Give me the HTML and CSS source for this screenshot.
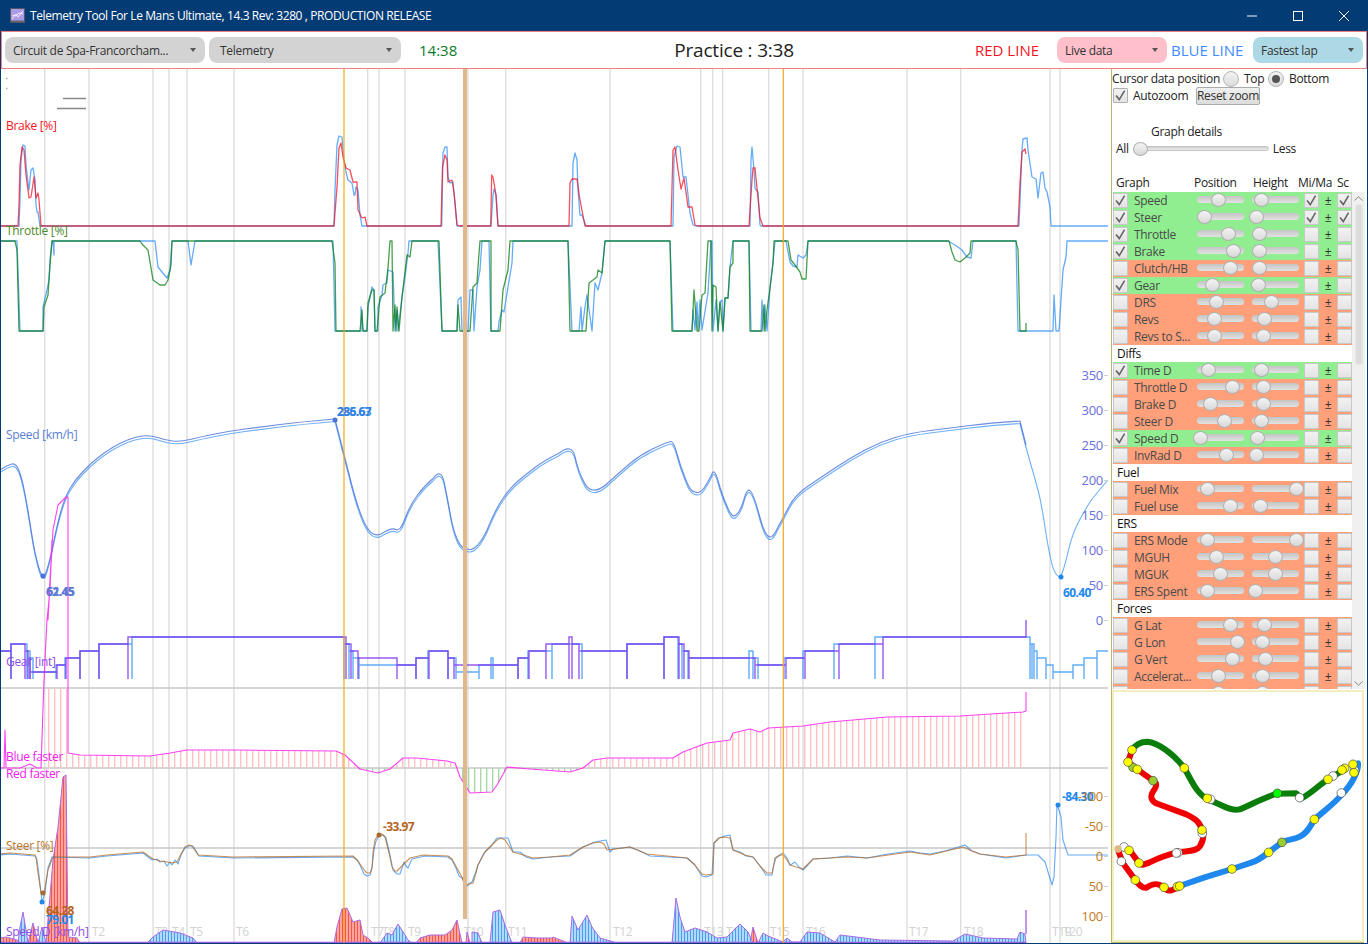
FILE: index.html
```html
<!DOCTYPE html>
<html lang="en">
<head>
<meta charset="utf-8">
<title>Telemetry Tool For Le Mans Ultimate</title>
<link rel="stylesheet" href="styles.css">
</head>
<body>
<div class="window">
  <header class="titlebar">
    <svg class="appicon" viewBox="0 0 15 15"><rect x=".5" y=".5" width="14" height="14" fill="#a99be8" stroke="#55556a"/><path d="M2 11 6 6l2 3 5-6M2 7l4 1 3-3 4 1" fill="none" stroke="#f4e9ff" stroke-width="1"/><rect x="1" y="12.5" width="13" height="1.5" fill="#666"/></svg>
    <span class="title">Telemetry Tool For Le Mans Ultimate, 14.3 Rev: 3280 , PRODUCTION RELEASE</span>
    <div class="caption">
      <span class="capbtn"><svg width="10" height="10" viewBox="0 0 10 10"><path d="M0 5h10" stroke="#fff" stroke-width="1"/></svg></span>
      <span class="capbtn"><svg width="10" height="10" viewBox="0 0 10 10"><rect x=".5" y=".5" width="9" height="9" fill="none" stroke="#fff"/></svg></span>
      <span class="capbtn"><svg width="10" height="10" viewBox="0 0 10 10"><path d="M0 0l10 10M10 0 0 10" stroke="#fff" stroke-width="1"/></svg></span>
    </div>
  </header>

  <div class="toolbar">
    <div class="combo combo-track">Circuit de Spa-Francorcham...<i class="caret"></i></div>
    <div class="combo combo-mode">Telemetry<i class="caret"></i></div>
    <span class="clock">14:38</span>
    <span class="session">Practice : 3:38</span>
    <span class="line-label red">RED LINE</span>
    <div class="combo combo-pink">Live data<i class="caret"></i></div>
    <span class="line-label blue">BLUE LINE</span>
    <div class="combo combo-blue">Fastest lap<i class="caret"></i></div>
  </div>

  <main class="content">
    <section class="chart">
      <svg class="plot" viewBox="1 69 1110 874" width="1110" height="874">
        <defs>
          <pattern id="hatchPink" patternUnits="userSpaceOnUse" width="6" height="10"><rect width="1.4" height="10" fill="#ffc2c2"/></pattern>
          <pattern id="hatchGreen" patternUnits="userSpaceOnUse" width="6" height="10"><rect width="1.4" height="10" fill="#a8d8a8"/></pattern>
          <pattern id="hatchRed" patternUnits="userSpaceOnUse" width="3" height="10"><rect width="3" height="10" fill="#ffa49c"/><rect width="1" height="10" fill="#f4564c"/></pattern>
          <pattern id="hatchBlue" patternUnits="userSpaceOnUse" width="3" height="10"><rect width="3" height="10" fill="#b2d8fb"/><rect width="1" height="10" fill="#4a9ff2"/></pattern>
          <path id="speedCurve" d="M0 470Q8 465 12 464Q16 463 19 470.5Q22 478 25 494Q28 510 31.5 532.5Q35 555 39 568Q43 582 46.5 571Q50 560 53.5 542.5Q57 525 61 511Q65 497 70 488.5Q75 480 82.5 472Q90 464 97.5 458Q105 452 112.5 447.5Q120 443 127.5 440Q135 437 142.5 436Q150 435 157.5 437.5Q165 440 172.5 441Q180 442 190 439.5Q200 437 215 434Q230 431 245 429Q260 427 280 424.5Q300 422 335 419L350 478Q358 510 365 524Q372 538 381 534Q392 527 396 529.5Q400 532 405 518.5Q410 505 417.5 495Q425 485 433 478.5Q441 468 444 481.5Q447 495 450 512.5Q453 530 457.5 540Q462 550 470 549.5Q478 549 487 530Q495 510 502.5 499Q510 488 517.5 481.5Q525 475 535 467.5Q545 460 558.5 453.5Q572 443 575 456.5Q578 470 582.5 479Q587 490 593.5 490Q600 491 610 481Q620 472 630 463.5Q640 455 652.5 449Q665 443 669 442Q673 439 676.5 452Q680 465 685 477.5Q690 492 695 492Q700 494 704 488Q708 482 711 476Q714 466 718 480.5Q722 495 727 506Q732 519 736 515Q740 512 743.5 501Q747 487 750.5 491Q754 495 759 514Q764 533 768 536Q772 540 777.5 528Q783 518 789 506.5Q795 495 807.5 486.5Q820 478 835 468Q850 458 865 450Q880 442 895 437.5Q910 433 930 430.5Q950 428 970 425.5Q990 423 1020 421L1026 445"/>
        </defs>

        <g class="grid">
          <path d="M44.7 69V943M89 69V943M153 69V943M169 69V943M187 69V943M234 69V943M367.7 69V943M379 69V943M405 69V943M468 69V943M505.7 69V943M610 69V943M700.7 69V943M712.7 69V943M722.7 69V943M768.7 69V943M803 69V943M907 69V943M960.7 69V943M1050 69V943M1060 69V943"/>
        </g>
        <g class="hgrid"><path d="M1 688H1108M1 768H1108M1 848H1108"/></g>

        <path class="mark" d="M63 98.5H86M57 108.5H86"/>
        <path class="dots" d="M6 78.5h1.5M6 88.5h1.5"/>

        <g class="turns">
          <text x="92" y="936">T2</text><text x="155" y="936">T3</text><text x="172" y="936">T4</text><text x="190" y="936">T5</text><text x="236" y="936">T6</text><text x="371" y="936">T7</text><text x="382" y="936">T8</text><text x="408" y="936">T9</text><text x="464" y="936">T10</text><text x="508" y="936">T11</text><text x="613" y="936">T12</text><text x="704" y="936">T13</text><text x="726" y="936">T14</text><text x="770" y="936">T15</text><text x="806" y="936">T16</text><text x="909" y="936">T17</text><text x="964" y="936">T18</text><text x="1052" y="936">T19</text><text x="1063" y="936">T20</text>
        </g>

        <!-- Brake -->
        <path class="ln blue-ln" d="M0 226H19L20 200 21 160 23 145 25 146 26 165 28 182 29 190 31 170 33 168 35 180 36 205 37 212 38 212 40 226H334L335 190 337 145 339 136 342 137 344 160 346 172 348 180 352 183 354 195 355 195 356 187 358 190 360 215 362 226H441.7L443 153 445 147 447 147 448 177 450 183 453 182 455 202 457 226H491L493 195 494 189 496 195 498 226H572L573 163 575 153 577 160 578 190 580 215 582 215 586 226H673L674 157 677 146 680 147 683 177 686 177 690 213 693 225 696 226H750L751 160 752 147 754 170 755 188 758 192 760 225 761 226H1019L1022 150 1023 139 1027 138 1028 150 1032 177 1036 179 1038 198 1041 173 1043 172 1045 188 1047 192 1050 207 1051 226H1108"/>
        <path class="ln red-ln" d="M0 226H18L19 205 20 165 22 147 24 150 26 175 29 198 31 197 34 177 36 198 38 193 39 200 41 226H334L337 187 339 148 341 143 343 157 346 168 350 170 353 182 357 182 358 210 362 218 365 217 367 226H441L442.5 167 445 155 447 160 448 182 452 180 454 193 457 225 460 226H490.7L491.7 175 493 177 496 195 498 226H569L570 183 572 179 577 179 580 200 585 226H671L673 150 675 147 678 170 681 189 684 178 688 207 692 207 695 225 698 226H749L752 180 753 168 755 168 757 188 760 218 763 226H1018L1020 183 1022 152 1025 149 1026 154"/>

        <!-- Throttle -->
        <path class="ln blue-ln" d="M0 241H17L20 331H43L43 307 47 290 49 280 50 260 52 241H53L54 255 54 241H155L158 267 162 272 167 278 170 270 172 241H188L191 265 193 253 195 241H333L335 331H361L361 307 363 331H367L368 307 372 287 374 290 375 331H378L378 307 382 295 383 285 387 283 388 270 393 272 395 331 397 310 398 331 402 297 405 277 408 253 409 241H438L442 331H457L458 300 461 297 462 331H468L470 290 473 290 474 331 477 287 480 270 482 241H489L491 331H498L499 322 502 310 504 312 508 287 512 263 513 241H568L572 331H579L581 307 582 331 585 307 587 295 592 331 595 283 598 290 602 273 605 241H670L673 331H692L693 310 695 330 697 302 698 330 700 300 702 330 708 293 711 241H712L713 331 716 300 718 331 720 302 722 300 723 331 725 298 728 298 730 267 733 241H749L751 331H761L762 300 764 331 765 305 767 331 770 288 773 263 775 241H786L790 262 793 266 797 267 798 255 803 258 806 255 808 241H948L955 245 962 250 967 257 971 258 973 241H1016L1018 331H1053L1054 295 1056 331H1059L1061 300 1063 270 1066 257 1067 241H1108"/>
        <path class="ln green-ln" d="M0 241H15L17 250 19 331H43L44 307 48 295 50 265 52 241H140L142 244 148 250 150 262 153 280 160 285 165 285 168 280 171 265 172 241H332L335 263 336 331H360L362 310 363 331H367L368 303 372 290 374 290 375 331H377L380 297 385 293 388 268 390 241H392L393 331 395 305 396 331 397 307 399 331 402 297 407 255 410 257 412 241H439L442 331H457L458 305 460 331H470L473 287 477 283 478 267 480 241H491L491 331H500L503 290 508 270 510 241H568L570 331H586L589 283 597 277 598 270 602 273 605 241H670L672 331H692L694 290 697 331H699L702 295 705 293 708 241H711L712 331 713 285 716 287 718 331 720 302 723 331 725 298 728 298 730 267 733 263 733 241H749L750 331H762L764 305 765 331 767 310 770 288 773 263 774 241H788L791 260 795 265 800 272 802 279 806 279 808 241H949L952 252 955 260 960 262 965 258 970 253 971 241H1016L1018 250 1020 331H1026L1026 323"/>

        <!-- Speed -->
        <use href="#speedCurve" class="ln lightblue-ln" transform="translate(0 2.5)"/>
        <path class="ln lightblue-ln" d="M1026 447Q1030 462 1033 472Q1036 482 1039 494Q1042 507 1045 527Q1048 547 1050.5 558Q1053 570 1056 574Q1060 580 1062.5 572Q1065 565 1068.5 550Q1072 535 1078.5 522Q1085 510 1090 502Q1095 495 1108 480"/>
        <use href="#speedCurve" class="ln speed-ln"/>
        <g class="pt-speed"><circle cx="335" cy="420" r="2.5"/><circle cx="43" cy="576" r="2.5"/></g>
        <circle class="pt-blue" cx="1061" cy="577" r="2.5"/>

        <!-- Gear -->
        <path class="gear blue-gear" d="M0 651H11V679V644H27V679V651H30V679V658H33V679V672H56V679V665H65V679V658H80V679V651H99V679V644H132V679V637H344V679V644H349V679V651H353V679V658H359V679V665H416V679V658H428V679V651H448V679V658H456V679V672H479V679V665H491V679V658H493V679V665H518V679V658H528V679V651H552V679V644H582V679V651H627V679V644H664V679V637H678V679V644H682V679V651H688V679V658H749V679V651H753V679V658H758V679V665H784V679V658H803V679V651H834V679V644H875V679V637H1030V679V644H1032V679V644H1034V679V651H1037V679V658H1046V679V665H1053V679V672H1073V679V665H1084V679V658H1097V679V651H1108"/>
        <path class="gear purple-gear" d="M0 651H11V679V644H25V679V651H28V679V658H30V679V672H57V679V665H66V679V658H80V679V651H99V679V644H128V679V637H346V679V644H351V679V651H358V679V658H397V679V665H416V679V658H429V679V651H448V679V658H454V679V665H518V679V658H529V679V651H546V679V644H569V679V637H572V679V644H579V679V651H627V679V644H664V679V637H679V679V644H684V679V651H689V679V658H755V679V665H786V679V658H805V679V651H839V679V644H883V679V637H1026V620"/>

        <!-- Time difference -->
        <polygon fill="url(#hatchPink)" points="44,768 44,688 68,688 68,753 80,755 150,756 170,753 187,750 234,750 336,751 345,755 360,768"/>
        <polygon fill="url(#hatchPink)" points="390,768 403,758 417,758 447,761 455,763 458,768"/>
        <polygon fill="url(#hatchPink)" points="583,768 593,760 607,758 673,758 683,752 707,743 730,740 733,733 750,729 760,732 768,728 803,726 830,722 887,717 960,716 1023,712 1023,768"/>
        <polygon fill="url(#hatchGreen)" points="360,768 378,773 390,768"/>
        <polygon fill="url(#hatchGreen)" points="458,768 460,777 470,793 492,792 497,785 507,768"/>
        <polygon fill="url(#hatchGreen)" points="507,768 530,769 570,772 583,768"/>
        <path class="ln magenta-ln" d="M1 768H4L5 730 6 768H20L30 764 37 768H41L44 680 47 620 50 590 52 540 48 620 53 530 58 505 66 497H68V753L80 755 150 756 170 753 187 750 234 750 336 751 345 755 360 769 378 773 390 769 403 758 417 758 447 761 455 763 460 777 470 793 492 792 497 785 507 767 530 769 570 772 583 768 593 760 607 758 673 758 683 752 707 743 730 740 733 733 750 729 760 732 768 728 803 726 830 722 887 717 960 716 1023 712 1026 711V692"/>

        <!-- Speed difference -->
        <g class="dif-red">
          <polygon points="0,943 0,938 6,937 17,940 20,943"/>
          <polygon points="28,943 33,923 38,943"/>
          <polygon points="46,943 53,860 58,827 63,777 66,775 68,937 77,938 80,943"/>
          <polygon points="334,943 337,927 342,909 347,908 353,922 360,920 363,935 368,938 373,943"/>
          <polygon points="416,943 420,938 430,935 445,935 452,930 457,920 462,943"/>
          <polygon points="466,943 467,932 470,943"/>
          <polygon points="520,943 523,937 537,938 552,938 553,937 568,943"/>
          <polygon points="623,943 650,943"/>
          <polygon points="750,943 753,927 758,943"/>
        </g>
        <g class="dif-blue">
          <polygon points="18,943 20,927 23,912 26,930 28,943"/>
          <polygon points="38,943 42,927 46,943"/>
          <polygon points="147,943 153,937 163,930 180,933 193,938 197,943"/>
          <polygon points="380,943 387,933 392,935 398,924 405,935 408,940 412,943"/>
          <polygon points="472,943 472,932 478,933 482,943"/>
          <polygon points="490,943 493,912 500,910 505,925 512,943"/>
          <polygon points="570,943 572,916 578,930 587,915 592,927 600,938 617,943"/>
          <polygon points="672,943 676,898 680,917 685,932 695,928 707,932 717,938 727,937 740,924 748,932 753,943"/>
          <polygon points="758,943 763,933 768,936 783,942 787,938 792,942 800,942 807,932 820,933 835,942 840,935 880,940 953,941 965,934 983,938 1017,939 1020,932 1025,934 1026,943"/>
        </g>
        <path class="ln diff-ln" d="M0 942.5H1026M1026 934V910"/>

        <!-- Steer -->
        <path class="ln blue-ln thin" d="M0 855 10 854 35 856 37 860 39 875 42 902 45 893 48 868 52 857 90 858 107 856 143 853 152 860 157 859 160 862 164 861 167 866 170 862 172 865 175 860 178 864 181 855 185 848 189 846 193 846 199 856 233 858 353 857 357 860 360 865 364 874 367 876 370 875 372 868 374 850 376 841 379 836 383 835 386 838 390 855 393 870 397 874 400 874 404 862 406 866 408 868 412 859 425 856 448 857 452 860 456 868 459 876 462 878 466 887 469 884 472 882 475 874 478 865 485 852 491 846 497 838 502 838 508 838 511 846 513 852 520 852 526 857 533 859 550 857 570 856 583 847 595 842 600 841 606 840 608 846 610 852 613 849 630 847 640 851 650 856 687 858 694 864 700 873 702 876 706 877 712 875 713 858 714 843 719 838 725 836 730 835 733 850 740 852 746 856 753 857 760 866 766 875 772 875 774 864 776 858 780 855 783 853 787 858 790 865 792 864 795 862 799 867 803 870 808 865 813 859 830 858 847 856 867 858 888 854 910 851 920 853 930 854 945 851 965 845 972 851 980 854 1006 858 1026 855 1038 855 1045 862 1052 885 1054 877 1056 837 1057 804 1061 817 1063 840 1068 855 1108 855"/>
        <path class="ln steer-ln" d="M0 854 10 853 35 855 36 857 38 873 41 893 44 893 48 870 53 857 90 857 107 855 143 852 153 859 160 861 167 862 172 863 177 862 181 854 185 847 189 845 192 846 198 855 233 857 353 856 358 861 362 867 365 871 367 873 370 873 372 868 373 852 375 840 378 835 382 834 385 837 389 853 392 867 395 871 397 871 403 865 410 858 423 855 448 856 452 859 458 870 462 877 465 885 469 884 473 883 476 873 478 865 484 853 490 847 497 840 501 838 505 840 509 846 513 852 520 854 533 858 550 857 570 855 583 847 593 843 600 842 604 844 607 850 615 849 630 847 647 854 687 858 695 865 702 874 706 875 713 874 714 843 719 838 725 837 730 838 733 850 745 855 753 857 760 866 767 873 772 873 774 864 775 858 780 855 783 855 787 860 790 865 796 867 803 869 808 864 813 859 847 857 867 858 910 852 930 855 963 847 972 851 980 854 1006 857 1026 855V833"/>
        <circle class="pt-steer" cx="379" cy="835" r="2.5"/><circle class="pt-steer" cx="43" cy="893" r="2.5"/>
        <circle class="pt-blue" cx="42" cy="902" r="2.5"/><circle class="pt-blue" cx="1058" cy="805" r="2.5"/>

        <!-- Selection cursors -->
        <path class="band" d="M465 69V919"/>
        <path class="cursor" d="M344 69V943M783.3 69V943"/>

        <!-- Series captions -->
        <g class="captions">
          <text class="c-brake" x="6" y="130">Brake [%]</text>
          <text class="c-throttle" x="6" y="235">Throttle [%]</text>
          <text class="c-speed" x="6" y="439">Speed [km/h]</text>
          <text class="c-gear" x="6" y="666">Gear [int]</text>
          <text class="c-mag" x="6" y="761">Blue faster</text>
          <text class="c-mag" x="6" y="778">Red faster</text>
          <text class="c-steer" x="6" y="850">Steer [%]</text>
          <text class="c-gear" x="6" y="936">Speed D [km/h]</text>
        </g>

        <!-- Value read-outs -->
        <g class="values">
          <text class="v-speed" x="337" y="416">286.67</text><text class="v-blue o" x="337" y="416">235.63</text>
          <text class="v-speed" x="46" y="596">62.45</text><text class="v-speed o" x="46.6" y="596">61.45</text>
          <text class="v-blue" x="1063" y="597">60.40</text>
          <text class="v-steer" x="383" y="831">-33.97</text>
          <text class="v-steer" x="46" y="915">64.28</text>
          <text class="v-blue" x="46" y="924">79.01</text>
          <text class="v-blue" x="1062" y="801">-84.30</text>
        </g>

        <!-- Axes -->
        <g class="ticks">
          <path d="M1104 375.5h4M1104 410.5h4M1104 445.5h4M1104 480.5h4M1104 515.5h4M1104 550.5h4M1104 585.5h4M1104 620.5h4M1104 796.5h4M1104 826.5h4M1104 856.5h4M1104 886.5h4M1104 916.5h4"/>
        </g>
        <g class="axis axis-speed">
          <text x="1103" y="380">350</text><text x="1103" y="415">300</text><text x="1103" y="450">250</text><text x="1103" y="485">200</text><text x="1103" y="520">150</text><text x="1103" y="555">100</text><text x="1103" y="590">50</text><text x="1103" y="625">0</text>
        </g>
        <g class="axis axis-steer">
          <text x="1103" y="801">-100</text><text x="1103" y="831">-50</text><text x="1103" y="861">0</text><text x="1103" y="891">50</text><text x="1103" y="921">100</text>
        </g>
      </svg>
    </section>

    <aside class="side">
      <div class="ctl ctl-cursor">
        <span class="ctl-label">Cursor data position</span>
        <i class="radio"></i><span class="radio-text">Top</span>
        <i class="radio sel"></i><span class="radio-text">Bottom</span>
      </div>
      <div class="ctl ctl-zoom">
        <span class="check on"><svg viewBox="0 0 16 16"><path d="M2.5 8 6.5 13 13 2"/></svg></span>
        <span class="zoom-label">Autozoom</span>
        <span class="btn">Reset zoom</span>
      </div>
      <div class="details-title">Graph details</div>
      <div class="details">
        <span>All</span>
        <span class="track-long"><i class="thumb" style="--c:7px"></i></span>
        <span>Less</span>
      </div>
      <div class="heads">
        <span class="h-graph">Graph</span><span class="h-pos">Position</span><span class="h-height">Height</span><span class="h-mima">Mi/Ma</span><span>Sc</span>
      </div>

      <div class="listwrap">
        <div class="list">
          <div class="row on"><span class="check on"><svg viewBox="0 0 16 16"><path d="M2.5 8 6.5 13 13 2"/></svg></span><span class="name">Speed</span><span class="track"><i class="thumb" style="--c:21px"></i></span><span class="track t2"><i class="thumb" style="--c:9px"></i></span><span class="check c-mm on"><svg viewBox="0 0 16 16"><path d="M2.5 8 6.5 13 13 2"/></svg></span><span class="pm">±</span><span class="check on"><svg viewBox="0 0 16 16"><path d="M2.5 8 6.5 13 13 2"/></svg></span></div>
          <div class="row on"><span class="check on"><svg viewBox="0 0 16 16"><path d="M2.5 8 6.5 13 13 2"/></svg></span><span class="name">Steer</span><span class="track"><i class="thumb" style="--c:7px"></i></span><span class="track t2"><i class="thumb" style="--c:4px"></i></span><span class="check c-mm on"><svg viewBox="0 0 16 16"><path d="M2.5 8 6.5 13 13 2"/></svg></span><span class="pm">±</span><span class="check on"><svg viewBox="0 0 16 16"><path d="M2.5 8 6.5 13 13 2"/></svg></span></div>
          <div class="row on"><span class="check on"><svg viewBox="0 0 16 16"><path d="M2.5 8 6.5 13 13 2"/></svg></span><span class="name">Throttle</span><span class="track"><i class="thumb" style="--c:31px"></i></span><span class="track t2"><i class="thumb" style="--c:7px"></i></span><span class="check c-mm"></span><span class="pm">±</span><span class="check"></span></div>
          <div class="row on"><span class="check on"><svg viewBox="0 0 16 16"><path d="M2.5 8 6.5 13 13 2"/></svg></span><span class="name">Brake</span><span class="track"><i class="thumb" style="--c:36px"></i></span><span class="track t2"><i class="thumb" style="--c:7px"></i></span><span class="check c-mm"></span><span class="pm">±</span><span class="check"></span></div>
          <div class="row off"><span class="check"></span><span class="name">Clutch/HB</span><span class="track"><i class="thumb" style="--c:33px"></i></span><span class="track t2"><i class="thumb" style="--c:7px"></i></span><span class="check c-mm"></span><span class="pm">±</span><span class="check"></span></div>
          <div class="row on"><span class="check on"><svg viewBox="0 0 16 16"><path d="M2.5 8 6.5 13 13 2"/></svg></span><span class="name">Gear</span><span class="track"><i class="thumb" style="--c:15px"></i></span><span class="track t2"><i class="thumb" style="--c:6px"></i></span><span class="check c-mm"></span><span class="pm">±</span><span class="check"></span></div>
          <div class="row off"><span class="check"></span><span class="name">DRS</span><span class="track"><i class="thumb" style="--c:19px"></i></span><span class="track t2"><i class="thumb" style="--c:19px"></i></span><span class="check c-mm"></span><span class="pm">±</span><span class="check"></span></div>
          <div class="row off"><span class="check"></span><span class="name">Revs</span><span class="track"><i class="thumb" style="--c:17px"></i></span><span class="track t2"><i class="thumb" style="--c:12px"></i></span><span class="check c-mm"></span><span class="pm">±</span><span class="check"></span></div>
          <div class="row off"><span class="check"></span><span class="name">Revs to S...</span><span class="track"><i class="thumb" style="--c:17px"></i></span><span class="track t2"><i class="thumb" style="--c:11px"></i></span><span class="check c-mm"></span><span class="pm">±</span><span class="check"></span></div>
          <div class="group">Diffs</div>
          <div class="row on"><span class="check on"><svg viewBox="0 0 16 16"><path d="M2.5 8 6.5 13 13 2"/></svg></span><span class="name">Time D</span><span class="track"><i class="thumb" style="--c:11px"></i></span><span class="track t2"><i class="thumb" style="--c:9px"></i></span><span class="check c-mm"></span><span class="pm">±</span><span class="check"></span></div>
          <div class="row off"><span class="check"></span><span class="name">Throttle D</span><span class="track"><i class="thumb" style="--c:35px"></i></span><span class="track t2"><i class="thumb" style="--c:11px"></i></span><span class="check c-mm"></span><span class="pm">±</span><span class="check"></span></div>
          <div class="row off"><span class="check"></span><span class="name">Brake D</span><span class="track"><i class="thumb" style="--c:13px"></i></span><span class="track t2"><i class="thumb" style="--c:11px"></i></span><span class="check c-mm"></span><span class="pm">±</span><span class="check"></span></div>
          <div class="row off"><span class="check"></span><span class="name">Steer D</span><span class="track"><i class="thumb" style="--c:27px"></i></span><span class="track t2"><i class="thumb" style="--c:9px"></i></span><span class="check c-mm"></span><span class="pm">±</span><span class="check"></span></div>
          <div class="row on"><span class="check on"><svg viewBox="0 0 16 16"><path d="M2.5 8 6.5 13 13 2"/></svg></span><span class="name">Speed D</span><span class="track"><i class="thumb" style="--c:3px"></i></span><span class="track t2"><i class="thumb" style="--c:5px"></i></span><span class="check c-mm"></span><span class="pm">±</span><span class="check"></span></div>
          <div class="row off"><span class="check"></span><span class="name">InvRad D</span><span class="track"><i class="thumb" style="--c:29px"></i></span><span class="track t2"><i class="thumb" style="--c:4px"></i></span><span class="check c-mm"></span><span class="pm">±</span><span class="check"></span></div>
          <div class="group">Fuel</div>
          <div class="row off"><span class="check"></span><span class="name">Fuel Mix</span><span class="track"><i class="thumb" style="--c:10px"></i></span><span class="track t2"><i class="thumb" style="--c:44px"></i></span><span class="check c-mm"></span><span class="pm">±</span><span class="check"></span></div>
          <div class="row off"><span class="check"></span><span class="name">Fuel use</span><span class="track"><i class="thumb" style="--c:33px"></i></span><span class="track t2"><i class="thumb" style="--c:8px"></i></span><span class="check c-mm"></span><span class="pm">±</span><span class="check"></span></div>
          <div class="group">ERS</div>
          <div class="row off"><span class="check"></span><span class="name">ERS Mode</span><span class="track"><i class="thumb" style="--c:10px"></i></span><span class="track t2"><i class="thumb" style="--c:44px"></i></span><span class="check c-mm"></span><span class="pm">±</span><span class="check"></span></div>
          <div class="row off"><span class="check"></span><span class="name">MGUH</span><span class="track"><i class="thumb" style="--c:19px"></i></span><span class="track t2"><i class="thumb" style="--c:23px"></i></span><span class="check c-mm"></span><span class="pm">±</span><span class="check"></span></div>
          <div class="row off"><span class="check"></span><span class="name">MGUK</span><span class="track"><i class="thumb" style="--c:23px"></i></span><span class="track t2"><i class="thumb" style="--c:23px"></i></span><span class="check c-mm"></span><span class="pm">±</span><span class="check"></span></div>
          <div class="row off"><span class="check"></span><span class="name">ERS Spent</span><span class="track"><i class="thumb" style="--c:10px"></i></span><span class="track t2"><i class="thumb" style="--c:3px"></i></span><span class="check c-mm"></span><span class="pm">±</span><span class="check"></span></div>
          <div class="group">Forces</div>
          <div class="row off"><span class="check"></span><span class="name">G Lat</span><span class="track"><i class="thumb" style="--c:33px"></i></span><span class="track t2"><i class="thumb" style="--c:12px"></i></span><span class="check c-mm"></span><span class="pm">±</span><span class="check"></span></div>
          <div class="row off"><span class="check"></span><span class="name">G Lon</span><span class="track"><i class="thumb" style="--c:40px"></i></span><span class="track t2"><i class="thumb" style="--c:10px"></i></span><span class="check c-mm"></span><span class="pm">±</span><span class="check"></span></div>
          <div class="row off"><span class="check"></span><span class="name">G Vert</span><span class="track"><i class="thumb" style="--c:35px"></i></span><span class="track t2"><i class="thumb" style="--c:13px"></i></span><span class="check c-mm"></span><span class="pm">±</span><span class="check"></span></div>
          <div class="row off"><span class="check"></span><span class="name">Accelerat...</span><span class="track"><i class="thumb" style="--c:21px"></i></span><span class="track t2"><i class="thumb" style="--c:10px"></i></span><span class="check c-mm"></span><span class="pm">±</span><span class="check"></span></div>
          <div class="row off"><span class="check"></span><span class="name"></span><span class="track"><i class="thumb" style="--c:21px"></i></span><span class="track t2"><i class="thumb" style="--c:10px"></i></span><span class="check c-mm"></span><span class="pm"></span><span class="check"></span></div>
        </div>
        <div class="scrollbar">
          <svg class="chev" viewBox="0 0 9 5"><path d="M.5 4.5 4.5 .8 8.5 4.5"/></svg>
          <div class="scroll-thumb"></div>
          <svg class="chev chev-down" viewBox="0 0 9 5"><path d="M.5 .5 4.5 4.2 8.5 .5"/></svg>
        </div>
      </div>

      <div class="mapbox">
        <svg class="map" viewBox="0 -30 780 756" width="260" height="252">
          <g class="trk">
            <path class="t-green" d="M72 150C85 130 100 125 118 125C150 128 195 160 229 204C250 240 265 280 298 297L345 318C365 328 378 332 395 328C430 315 465 292 508 281L565 280C572 282 570 296 578 296C600 287 630 258 660 238L712 207"/>
            <path class="t-blue" d="M735 193L750 190C752 210 735 250 700 285C680 310 645 335 620 358C605 380 598 400 575 410C555 420 535 418 522 427L482 457C465 470 450 482 430 488L372 507 290 532 215 558"/>
            <path class="t-red" d="M215 558C195 572 180 578 168 562C150 548 135 550 115 563C100 565 92 552 82 540L45 490 30 450M65 451 93 489C100 498 105 494 125 487C150 475 175 465 205 458C240 452 265 455 275 440C285 425 290 410 282 390C275 365 260 355 235 343L150 312C130 305 125 290 135 275C145 262 150 250 135 242L88 208 60 186 72 150"/>
          </g>
          <g class="pt-white"><circle cx="308" cy="298" r="13"/><circle cx="575" cy="293" r="13"/><circle cx="675" cy="228" r="13"/><circle cx="740" cy="212" r="13"/><circle cx="700" cy="279" r="13"/><circle cx="283" cy="400" r="13"/><circle cx="210" cy="458" r="13"/><circle cx="205" cy="459" r="13"/><circle cx="48" cy="441" r="13"/><circle cx="40" cy="484" r="13"/></g>
          <g class="pt-olive"><circle cx="75" cy="202" r="13"/><circle cx="135" cy="242" r="13"/><circle cx="522" cy="427" r="13"/></g>
          <g class="pt-yellow"><circle cx="72" cy="150" r="13"/><circle cx="60" cy="186" r="13"/><circle cx="88" cy="208" r="13"/><circle cx="229" cy="204" r="13"/><circle cx="298" cy="295" r="13"/><circle cx="660" cy="238" r="13"/><circle cx="710" cy="205" r="13"/><circle cx="702" cy="210" r="13"/><circle cx="738" cy="218" r="13"/><circle cx="735" cy="193" r="13"/><circle cx="619" cy="358" r="13"/><circle cx="482" cy="457" r="13"/><circle cx="372" cy="507" r="13"/><circle cx="208" cy="560" r="13"/><circle cx="215" cy="558" r="13"/><circle cx="168" cy="562" r="13"/><circle cx="82" cy="540" r="13"/><circle cx="93" cy="489" r="13"/><circle cx="63" cy="451" r="13"/><circle cx="282" cy="390" r="13"/></g>
          <circle class="pt-lime" cx="508" cy="280" r="13"/>
          <circle class="pt-tan" cx="30" cy="447" r="11"/>
        </svg>
      </div>
    </aside>
  </main>
</div>
</body>
</html>
```

FILE: styles.css
```css
* { box-sizing: border-box; }
html, body { margin: 0; padding: 0; height: 100%; overflow: hidden; background: #fff; }
body { font-family: "Open Sans", "Noto Sans", "Liberation Sans", sans-serif; font-size: 12px; color: #222; }

.window { width: 1368px; height: 944px; display: flex; flex-direction: column; border: 1px solid #033b75; border-top: 0; background: #fff; }

.titlebar { height: 31px; flex: none; background: #033b75; color: #fff; display: flex; align-items: center; padding-left: 9px; }
.appicon { width: 15px; height: 15px; flex: none; }
.title { margin-left: 5px; font-size: 12px; white-space: nowrap; letter-spacing: -.4px; }
.caption { margin-left: auto; display: flex; }
.capbtn { width: 46px; height: 31px; display: flex; align-items: center; justify-content: center; }
.capbtn svg { display: block; }

.toolbar { height: 38px; flex: none; border: 1px solid #f08080; display: flex; align-items: center; padding: 0 3px; }
.combo { height: 26px; border-radius: 8px; background: #d3d3d3; color: #333; font-size: 12px; letter-spacing: -.3px; display: flex; align-items: center; justify-content: space-between; padding: 0 9px 0 8px; white-space: nowrap; flex: none; margin-right: 4px; }
.combo-track { width: 200px; }
.combo-mode { width: 192px; padding-left: 11px; }
.combo-pink { width: 110px; background: #ffc0cb; }
.combo-blue { width: 110px; background: #add8e6; margin-right: 0; }
.caret { width: 0; height: 0; border-left: 3.5px solid transparent; border-right: 3.5px solid transparent; border-top: 4px solid #555; }
.clock { margin-left: 14px; font-size: 15px; color: #0c7a2a; letter-spacing: 0; }
.session { flex: 1; text-align: center; padding-left: 36px; font-size: 19px; color: #222; letter-spacing: -.2px; }
.line-label { width: 82px; flex: none; font-size: 15px; letter-spacing: 0; white-space: nowrap; }
.red { color: #f5141e; }
.blue { color: #3f8cff; }

.content { flex: 1; display: flex; min-height: 0; }
.chart { width: 1110px; flex: none; overflow: hidden; }
.plot { display: block; }

.grid path { stroke: #dedede; stroke-width: 1.4; fill: none; }
.hgrid path { stroke: #c8c8c8; stroke-width: 1.4; fill: none; }
.mark { stroke: #888; stroke-width: 1.5; fill: none; }
.dots { stroke: #aaa; stroke-width: 1.5; fill: none; }
.turns text { font: 12px "Open Sans", sans-serif; fill: #d2d2d2; letter-spacing: -.3px; }

.ln { fill: none; stroke-width: 1.3; stroke-linejoin: round; }
.blue-ln { stroke: #2a8bf5; opacity: .72; }
.lightblue-ln { stroke: #4a9cf5; opacity: .8; stroke-width: 1.1; }
.red-ln { stroke: #f20d1e; opacity: .72; }
.green-ln { stroke: #0a7d12; opacity: .75; }
.speed-ln { stroke: #4a70d8; opacity: .8; stroke-width: 1.1; }
.magenta-ln { stroke: #ff20f0; opacity: .85; stroke-width: 1.1; }
.steer-ln { stroke: #b9691f; opacity: .75; stroke-width: 1.1; }
.diff-ln { stroke: #9a5fe0; }
.thin { stroke-width: 1.1; }
.gear { fill: none; stroke-width: 1.4; }
.blue-gear { stroke: #2b8ff5; opacity: .75; }
.purple-gear { stroke: #7b2ff0; opacity: .8; }
.dif-red polygon { fill: url(#hatchRed); stroke: #a86ae4; stroke-width: 1; }
.dif-blue polygon { fill: url(#hatchBlue); stroke: #a86ae4; stroke-width: 1; }
.pt-speed circle { fill: #4a74d6; }
.pt-blue { fill: #1e88ee; }
.pt-steer { fill: #a96a2a; }
.band { stroke: #e0b88c; stroke-width: 4; fill: none; }
.cursor { stroke: #f3a81c; stroke-width: 1.2; fill: none; }

.captions text { font: 12px "Open Sans", sans-serif; letter-spacing: -.3px; }
.c-brake { fill: #f5141e; }
.c-throttle { fill: #4c8a26; }
.c-speed { fill: #5a7fd2; }
.c-gear { fill: #8d4fe6; }
.c-mag { fill: #f020f0; }
.c-steer { fill: #b8752a; }

.values text { font: 700 12px "Open Sans", sans-serif; letter-spacing: -.6px; }
.v-speed { fill: #5a78d0; }
.v-blue { fill: #1e88ee; }
.v-steer { fill: #b5651d; }
.o { opacity: .8; }

.ticks path { stroke: #cfcfcf; stroke-width: 1; fill: none; }
.axis text { font: 13px "Open Sans", sans-serif; text-anchor: end; letter-spacing: -.3px; }
.axis-speed text { fill: #6a6fdc; }
.axis-steer text { fill: #c27a20; }

.side { width: 256px; flex: none; border-left: 1px solid #bdb76b; display: flex; flex-direction: column; letter-spacing: -.3px; }
.ctl { display: flex; align-items: center; height: 17px; white-space: nowrap; }
.ctl-cursor { margin-top: 1px; }
.ctl-label { width: 111px; flex: none; }
.radio { width: 16px; height: 16px; flex: none; border-radius: 50%; border: 1px solid #b5b5b5; background: linear-gradient(#f2f2f2, #dcdcdc); display: flex; align-items: center; justify-content: center; }
.radio.sel::after { content: ""; width: 8px; height: 8px; border-radius: 50%; background: #555; }
.radio-text { width: 29px; padding-left: 5px; flex: none; }
.ctl-zoom { padding-left: 1px; }
.zoom-label { width: 68px; padding-left: 5px; flex: none; }
.btn { width: 64px; height: 18px; border: 1px solid #aaa; border-radius: 2px; background: linear-gradient(#f0f0f0, #dcdcdc); display: flex; align-items: center; justify-content: center; color: #333; }
.details-title { margin-top: 19px; height: 17px; line-height: 17px; padding-left: 39px; }
.details { height: 17px; display: flex; align-items: center; padding-left: 4px; gap: 4px; }
.track-long { position: relative; width: 136px; height: 5px; border-radius: 3px; background: linear-gradient(#cfcfcf, #ececec); border: 1px solid #c4c4c4; }
.heads { margin-top: 17px; margin-bottom: 1px; height: 17px; display: flex; align-items: center; padding-left: 4px; white-space: nowrap; }
.h-graph { width: 78px; }
.h-pos { width: 59px; }
.h-height { width: 45px; }
.h-mima { width: 39px; }

.listwrap { height: 497px; flex: none; display: flex; overflow: hidden; padding-left: 1px; }
.list { width: 239px; flex: none; overflow: hidden; }
.row { height: 17px; display: flex; align-items: center; color: #4a4a4a; }
.row.on { background: #90ee90; }
.row.off { background: #ffa07a; }
.group { height: 17px; line-height: 17px; padding-left: 4px; color: #111; background: #fff; }
.name { width: 69px; flex: none; padding-left: 6px; white-space: nowrap; overflow: hidden; }
.check { width: 15px; height: 15px; flex: none; background: linear-gradient(#f2f2f2, #e4e4e4); border: 1px solid #c8c8c8; border-radius: 1px; display: block; }
.check svg { display: block; width: 100%; height: 100%; fill: none; stroke: #666; stroke-width: 2; }
.ctl-zoom .check { border-color: #b0b0b0; }
.c-mm { margin-left: 5px; }
.pm { width: 18px; flex: none; text-align: center; color: #333; }
.track { position: relative; width: 47px; height: 7px; flex: none; border-radius: 4px; background: linear-gradient(#c4c4c4, #e2e2e2); top: -1px; }
.t2 { margin-left: 8px; }
.thumb { position: absolute; left: calc(var(--c) - 7.5px); top: 50%; margin-top: -7px; width: 15px; height: 14px; border-radius: 50%; border: 1px solid #b0b0b0; background: linear-gradient(#f4f4f4, #d8d8d8); }

.scrollbar { width: 13px; flex: none; background: #f0f0f0; display: flex; flex-direction: column; align-items: center; padding-top: 4px; padding-bottom: 3px; }
.chev { width: 9px; height: 5px; flex: none; fill: none; stroke: #888; stroke-width: 1; }
.scroll-thumb { width: 8px; height: 161px; margin-top: 3px; background: #dcdcdc; border: 1px solid #e8e8e8; border-radius: 3px; }
.chev-down { margin-top: auto; }

.mapbox { flex: 1; margin: 1px 3px 1px 0; border: 2px solid #f3eec0; box-shadow: 0 1px 0 #bdb76b; overflow: hidden; }
.map { display: block; margin: -2px 0 0 -6px; }
.trk path { fill: none; stroke-width: 18; stroke-linecap: round; stroke-linejoin: round; }
.t-green { stroke: #0a7d0a; }
.t-blue { stroke: #1e88ee; }
.t-red { stroke: #f00000; }
.pt-white circle, .pt-olive circle, .pt-yellow circle, .pt-lime { stroke: #444; stroke-width: 2; }
.pt-white circle { fill: #fff; }
.pt-olive circle { fill: #9acd32; }
.pt-yellow circle { fill: #ffff00; }
.pt-lime { fill: #00ff00; }
.pt-tan { fill: #deb887; }
```
